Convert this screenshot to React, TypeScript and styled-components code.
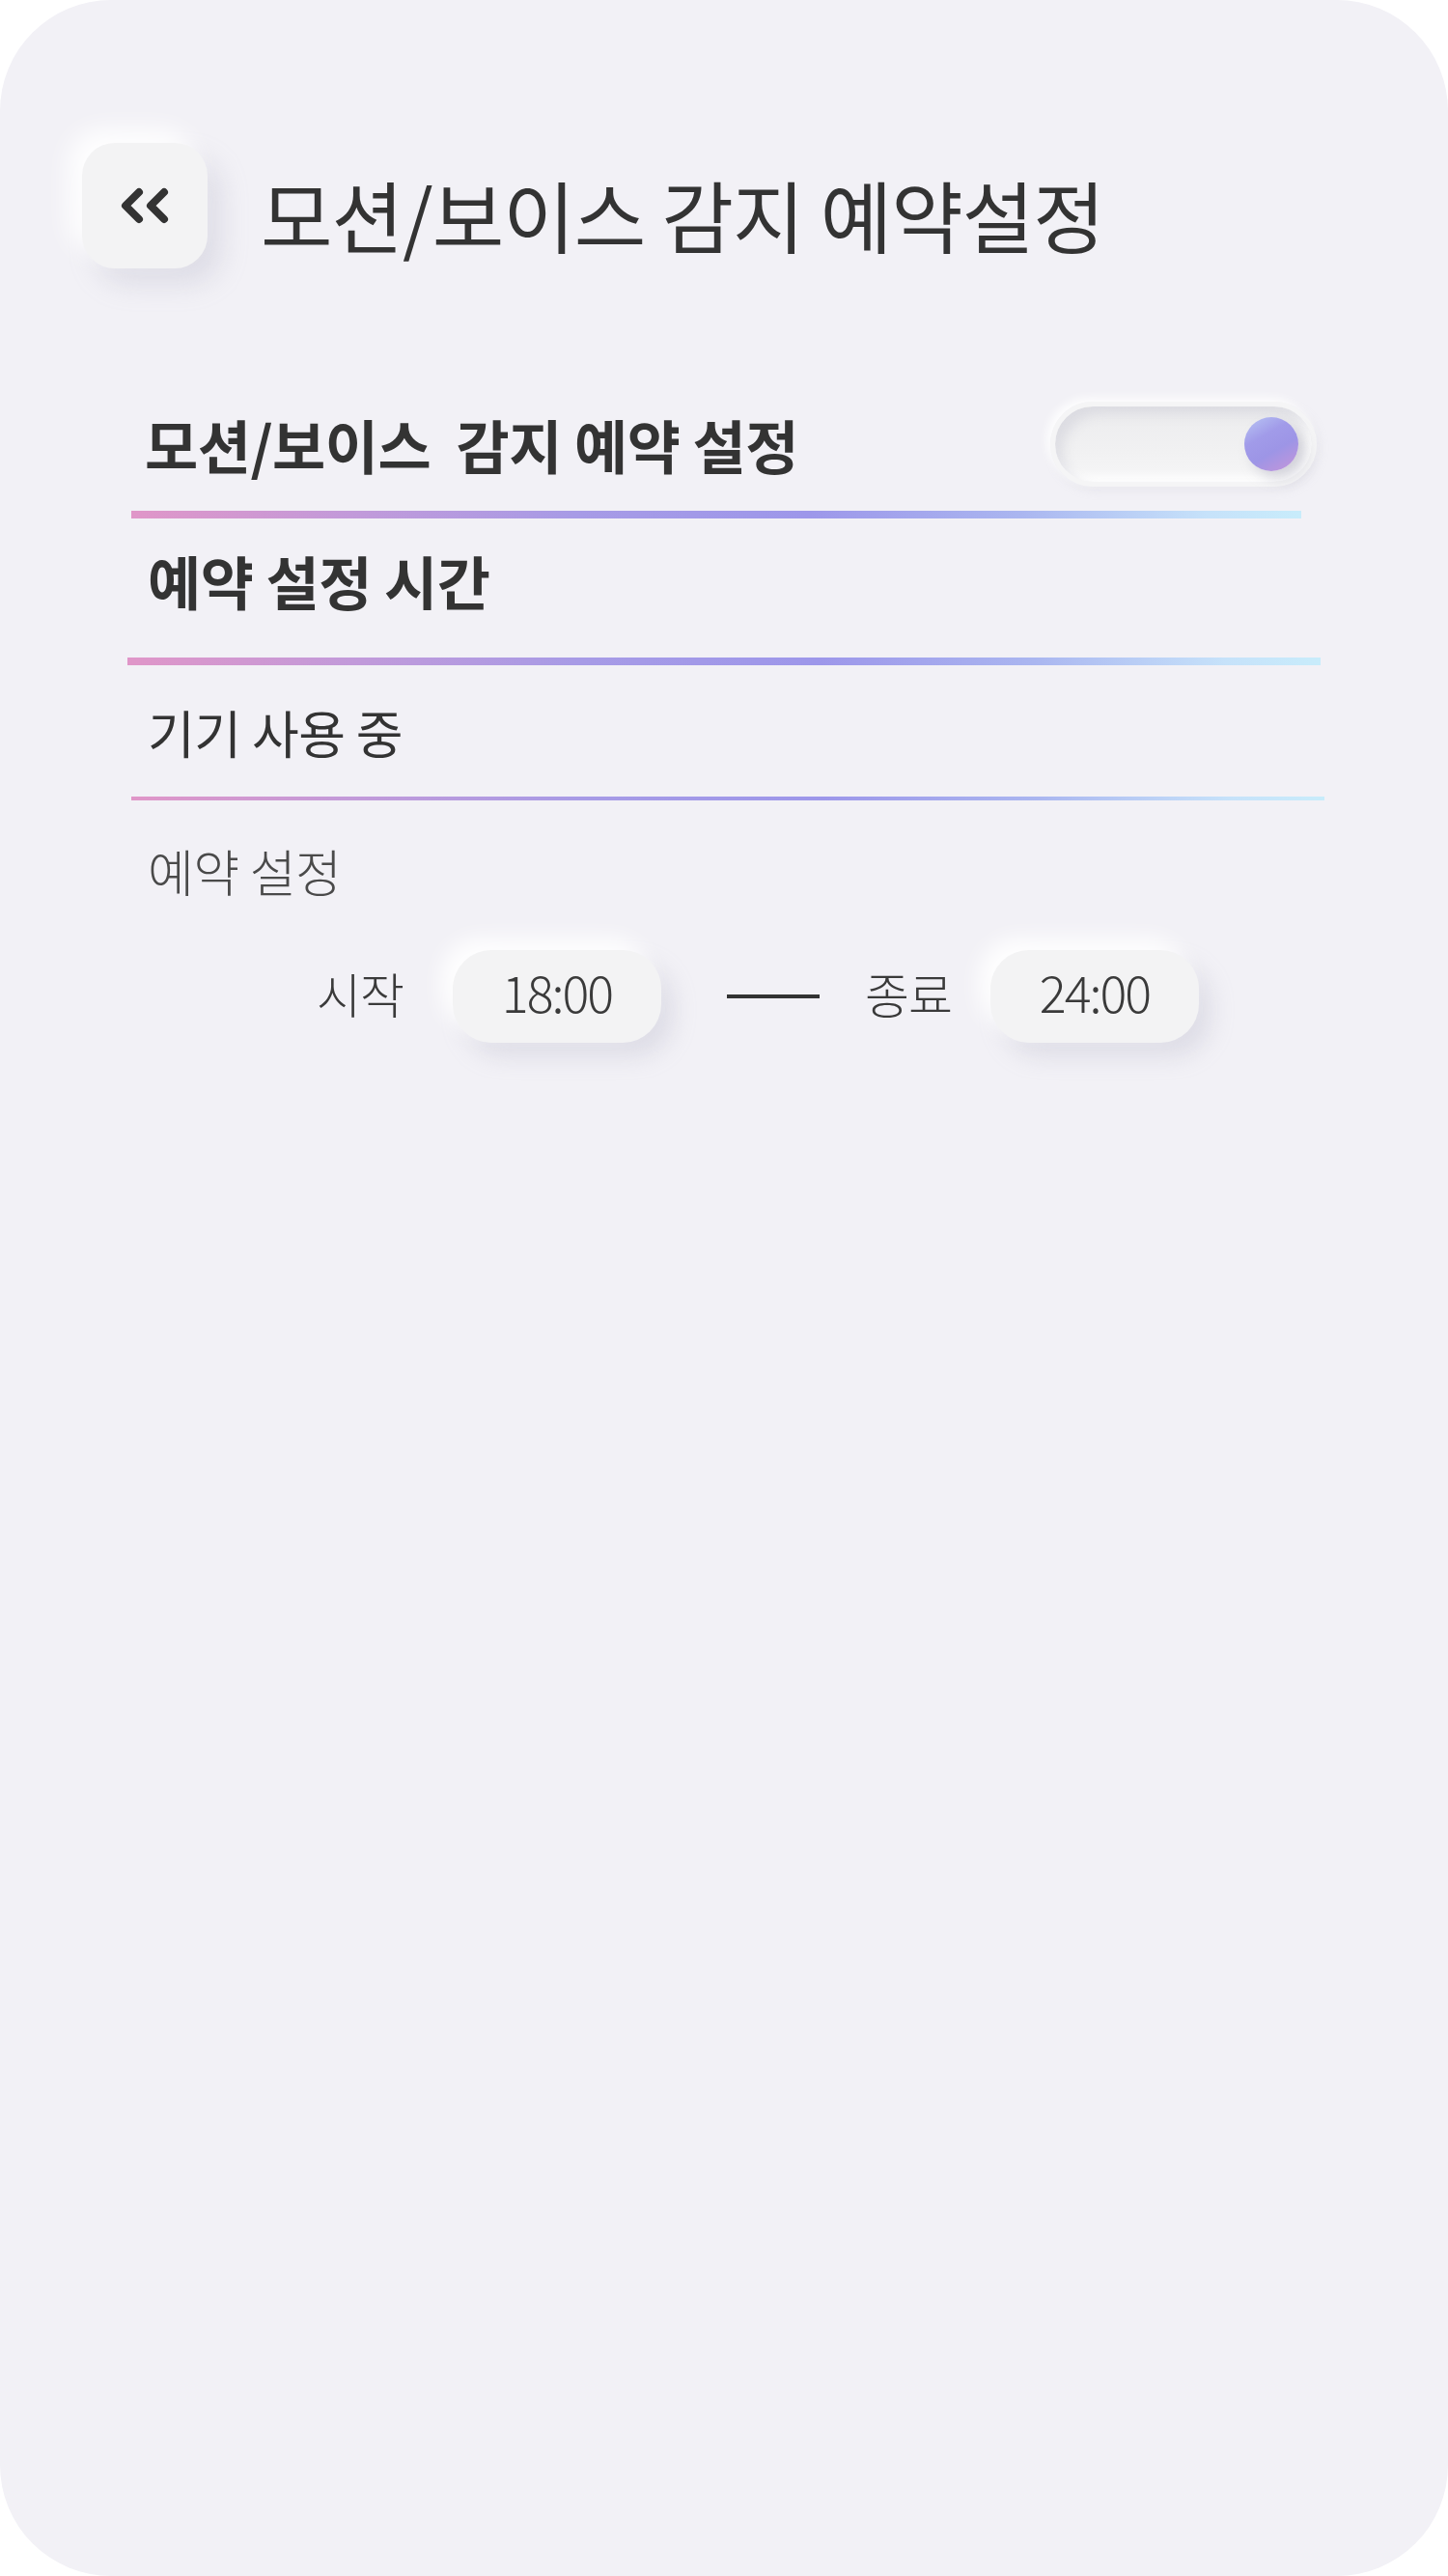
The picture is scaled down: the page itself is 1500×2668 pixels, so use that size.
import React from "react";
import styled, { createGlobalStyle } from "styled-components";

const Global = createGlobalStyle`
  html, body { margin: 0; padding: 0; background: #ffffff; }
  #root { width: 1500px; }
  * { box-sizing: border-box; }
`;

const FONT = `"Noto Sans CJK KR", "Noto Sans", sans-serif`;

const Screen = styled.div`
  width: 1500px;
  height: 2668px;
  background: #f2f1f6;
  border-radius: 115px;
  overflow: hidden;
  font-family: ${FONT};
  color: #333333;
  padding-top: 148px;
`;

const Header = styled.header`
  display: flex;
  align-items: center;
  padding-left: 85px;
`;

const BackButton = styled.button`
  width: 130px;
  height: 130px;
  border: none;
  border-radius: 34px;
  background: #f3f3f4;
  display: flex;
  align-items: center;
  justify-content: center;
  padding: 0;
  box-shadow: -14px -14px 26px rgba(255, 255, 255, 0.95),
    14px 16px 28px rgba(170, 170, 190, 0.28);
  cursor: pointer;
`;

const Title = styled.h1`
  margin: 14px 0 0 55px;
  font-size: 81px;
  font-weight: 400;
  line-height: 1;
  color: #333333;
  letter-spacing: -1px;
`;

const Content = styled.main`
  margin-left: 132px;
  width: 1240px;
  display: flex;
  flex-direction: column;
`;

const Row = styled.div<{ $top: number; $height: number; $pad?: number }>`
  display: flex;
  align-items: center;
  justify-content: space-between;
  margin-top: ${(p) => p.$top}px;
  height: ${(p) => p.$height}px;
  padding-left: ${(p) => p.$pad ?? 21}px;
`;

const Label = styled.span<{ $size: number; $weight: number; $color?: string }>`
  font-size: ${(p) => p.$size}px;
  font-weight: ${(p) => p.$weight};
  color: ${(p) => p.$color ?? "#333333"};
  line-height: 1;
  white-space: pre;
  letter-spacing: -0.5px;
`;

const Divider = styled.div<{ $top: number; $left: number; $width: number; $thick: number }>`
  margin-top: ${(p) => p.$top}px;
  margin-left: ${(p) => p.$left}px;
  width: ${(p) => p.$width}px;
  height: ${(p) => p.$thick}px;
  background: linear-gradient(
    90deg,
    #e096c8 0%,
    #c39ad9 18%,
    #a79be6 38%,
    #9d97ea 58%,
    #aab6f0 76%,
    #c6e2fa 92%,
    #c8ecfb 100%
  );
`;

const ToggleTrack = styled.div`
  width: 276px;
  height: 88px;
  margin-right: 8px;
  border-radius: 44px;
  background: linear-gradient(180deg, #ececee 0%, #f1f1f2 60%, #f6f6f7 100%);
  border: 5px solid #f5f5f6;
  box-shadow: inset 8px 8px 12px rgba(200, 200, 210, 0.45),
    inset -6px -6px 10px rgba(255, 255, 255, 0.9),
    -4px -4px 10px rgba(255, 255, 255, 0.9),
    3px 4px 10px rgba(200, 200, 212, 0.25);
  display: flex;
  align-items: center;
  justify-content: flex-end;
  padding-right: 14px;
`;

const Knob = styled.div`
  width: 56px;
  height: 56px;
  border-radius: 50%;
  background: linear-gradient(150deg, #b9c6f4 0%, #a19be9 35%, #9d95e6 60%, #c795d9 100%);
  box-shadow: 8px 8px 14px rgba(150, 150, 170, 0.35);
`;

const TimeRow = styled.div`
  display: flex;
  align-items: center;
  margin-top: 47px;
  height: 96px;
  padding-left: 196px;
`;

const TimeLabel = styled.span<{ $gap: number }>`
  font-size: 50px;
  font-weight: 300;
  line-height: 1;
  color: #3a3a3a;
  margin-right: ${(p) => p.$gap}px;
  margin-bottom: 8px;
  letter-spacing: -1px;
`;

const TimePill = styled.div`
  width: 216px;
  height: 96px;
  border-radius: 40px;
  background: #f3f3f4;
  display: flex;
  align-items: center;
  justify-content: center;
  font-size: 52px;
  font-weight: 300;
  line-height: 1;
  padding-bottom: 10px;
  color: #3a3a3a;
  letter-spacing: -2px;
  box-shadow: -12px -12px 22px rgba(255, 255, 255, 0.95),
    12px 14px 24px rgba(170, 170, 190, 0.28);
`;

const Dash = styled.div`
  width: 96px;
  height: 4px;
  background: #333333;
  margin: 0 47px 0 68px;
`;

const ChevronIcon = () => (
  <svg width="54" height="38" viewBox="0 0 54 38" fill="none">
    <path d="M21 5 L7 19 L21 33" stroke="#333" strokeWidth="8" strokeLinecap="round" strokeLinejoin="round" />
    <path d="M47 5 L33 19 L47 33" stroke="#333" strokeWidth="8" strokeLinecap="round" strokeLinejoin="round" />
  </svg>
);

export default function App() {
  return (
    <>
      <Global />
      <Screen>
        <Header>
          <BackButton aria-label="back">
            <ChevronIcon />
          </BackButton>
          <Title>모션/보이스 감지 예약설정</Title>
        </Header>
        <Content>
          <Row $top={138} $height={88} $pad={18}>
            <Label $size={60} $weight={700}>{"모션/보이스  감지 예약 설정"}</Label>
            <ToggleTrack>
              <Knob />
            </ToggleTrack>
          </Row>
          <Divider $top={25} $left={4} $width={1212} $thick={8} />
          <Row $top={24} $height={80}>
            <Label $size={60} $weight={700}>예약 설정 시간</Label>
          </Row>
          <Divider $top={40} $left={0} $width={1236} $thick={8} />
          <Row $top={34} $height={70}>
            <Label $size={53} $weight={400}>기기 사용 중</Label>
          </Row>
          <Divider $top={32} $left={4} $width={1236} $thick={4} />
          <Row $top={38} $height={70}>
            <Label $size={52} $weight={300} $color="#4a4a4a">예약 설정</Label>
          </Row>
          <TimeRow>
            <TimeLabel $gap={51}>시작</TimeLabel>
            <TimePill>18:00</TimePill>
            <Dash />
            <TimeLabel $gap={40}>종료</TimeLabel>
            <TimePill>24:00</TimePill>
          </TimeRow>
        </Content>
      </Screen>
    </>
  );
}
